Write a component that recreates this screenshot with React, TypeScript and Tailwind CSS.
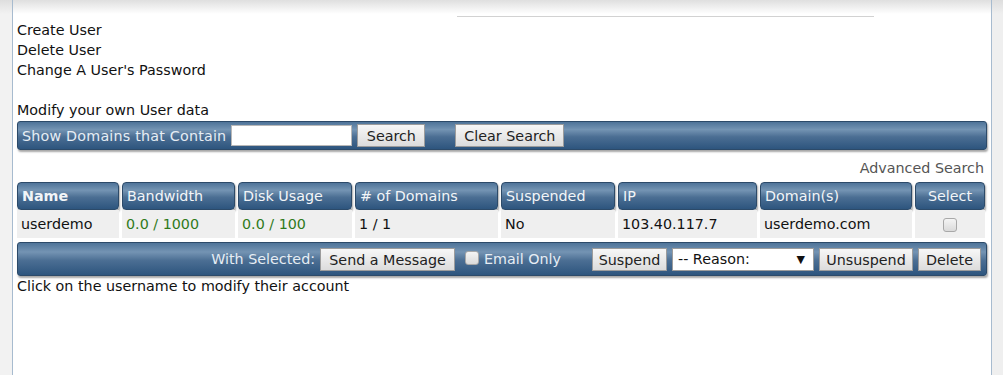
import React from "react"

const links = ["Create User", "Delete User", "Change A User's Password"]

const columns = [
  { name: "Name", w: "w-[102px]", bold: true },
  { name: "Bandwidth", w: "w-[113px]" },
  { name: "Disk Usage", w: "w-[114px]" },
  { name: "# of Domains", w: "w-[143px]" },
  { name: "Suspended", w: "w-[114px]" },
  { name: "IP", w: "w-[139px]" },
  { name: "Domain(s)", w: "w-[152px]" },
  { name: "Select", w: "w-[70px]", center: true },
]

const row = [
  { v: "userdemo" },
  { v: "0.0 / 1000", green: true },
  { v: "0.0 / 100", green: true },
  { v: "1 / 1" },
  { v: "No" },
  { v: "103.40.117.7" },
  { v: "userdemo.com" },
]

const blueBar =
  "bg-[linear-gradient(to_bottom,#4f7499_0%,#7494b3_28%,#4b6e93_55%,#2d557e_100%)] border border-[#2c4a69] shadow-[1px_2px_2px_rgba(0,0,0,0.35)]"

function Btn({ children, className = "" }: { children: React.ReactNode; className?: string }) {
  return (
    <button
      className={`h-[23px] px-[2px] pt-[2px] whitespace-nowrap border border-[#9c9c9c] bg-[linear-gradient(to_bottom,#f7f7f7,#dcdcdc)] text-[#222] leading-none ${className}`}
    >
      {children}
    </button>
  )
}

function Box() {
  return (
    <span className="inline-block w-[14px] h-[14px] rounded-[3px] border border-[#a8a8a8] bg-[linear-gradient(to_bottom,#f4f4f4,#dadada)]" />
  )
}

export default function App() {
  return (
    <div className="flex h-[375px] overflow-hidden bg-white text-[14.3px] text-[#111] font-['DejaVu_Sans',Verdana,sans-serif]">
      <div className="w-[13px] shrink-0 bg-[linear-gradient(to_bottom,#dedede,#f2f2f2_14px,#f2f2f2)] border-r border-[#a7bbcf]" />

      <div className="flex-1 bg-[linear-gradient(to_bottom,#dfdfdf,#ffffff_14px)]">
        <div className="h-[20px] pt-[16px]">
          <div className="ml-[444px] w-[417px] h-px bg-[#d2d2d2]" />
        </div>

        <div className="pl-[4px] leading-[20px]">
          {links.map((l) => (
            <div key={l}>{l}</div>
          ))}
          <div className="h-[20px]" />
          <div>Modify your own User data</div>
        </div>

        {/* search bar */}
        <div className={`mx-[4px] mt-[1px] h-[29px] rounded-[3px] flex items-center pl-[4px] ${blueBar}`}>
          <span className="text-[#e6edf4] tracking-[0.2px] pt-[2px]">Show Domains that Contain</span>
          <input className="ml-[5px] w-[121px] h-[21px] bg-white border border-[#b8b8b8]" />
          <Btn className="ml-[5px] w-[68px]">Search</Btn>
          <Btn className="ml-[30px] w-[109px]">Clear Search</Btn>
        </div>

        <div className="mt-[8px] mr-[7px] text-right text-[#555] leading-[20px]">Advanced Search</div>

        {/* table */}
        <div className="ml-[4px] mt-[4px]">
          <div className="flex gap-[3px]">
            {columns.map((c) => (
              <div
                key={c.name}
                className={`${c.w} h-[28px] rounded-[4px] flex items-center px-[4px] pt-[1px] text-[#f2f5f8] ${c.bold ? "font-bold" : ""} ${c.center ? "justify-center" : ""} ${blueBar}`}
              >
                {c.name}
              </div>
            ))}
          </div>
          <div className="flex gap-[3px] bg-white">
            {columns.map((c, i) => (
              <div key={c.name} className={`${c.w} h-[28px] flex items-center px-[4px] pt-[1px] bg-[#efefef] ${c.center ? "justify-center" : ""}`}>
                {i < row.length ? (
                  <span className={row[i].green ? "text-[#2f7a1c]" : ""}>{row[i].v}</span>
                ) : (
                  <Box />
                )}
              </div>
            ))}
          </div>
        </div>

        {/* bottom actions */}
        <div className={`mx-[4px] mt-[4px] h-[34px] rounded-[3px] flex items-center justify-end pr-[5px] ${blueBar}`}>
          <span className="text-[#e6edf4] pt-[2px]">With Selected:</span>
          <Btn className="ml-[5px] w-[135px]">Send a Message</Btn>
          <span className="ml-[10px] self-start mt-[7px]">
            <Box />
          </span>
          <span className="ml-[5px] text-[#e6edf4] pt-[2px]">Email Only</span>
          <Btn className="ml-[31px] w-[75px]">Suspend</Btn>
          <div className="ml-[5px] w-[142px] h-[23px] pt-[2px] bg-white border border-[#9c9c9c] flex items-center justify-between pl-[5px] pr-[8px]">
            <span>-- Reason:</span>
            <span className="text-[11px]">▼</span>
          </div>
          <Btn className="ml-[5px] w-[94px]">Unsuspend</Btn>
          <Btn className="ml-[5px] w-[63px]">Delete</Btn>
        </div>

        <div className="pl-[4px] leading-[20px]">Click on the username to modify their account</div>
      </div>

      <div className="w-[12px] shrink-0 bg-[linear-gradient(to_bottom,#dedede,#efefef_14px,#efefef)] border-l border-[#a7bbcf]" />
    </div>
  )
}
